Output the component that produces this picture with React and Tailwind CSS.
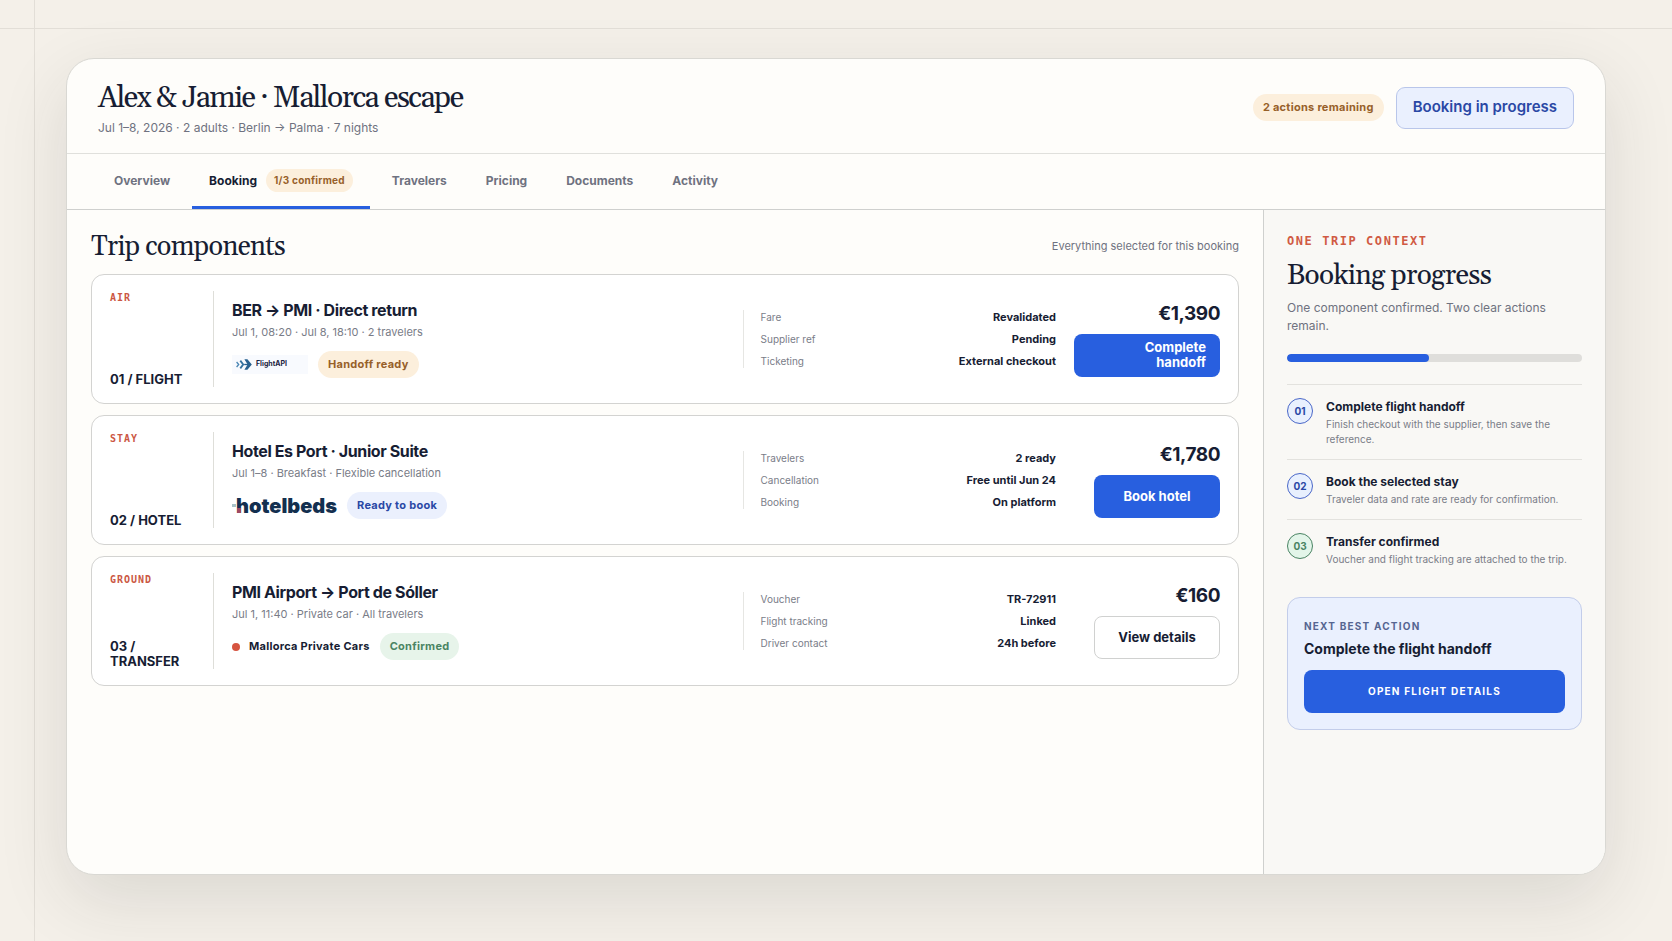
import React from "react";

const SERIF = "font-['Georgia','Gelasio','Liberation_Serif',serif]";
const MONO = "font-['DejaVu_Sans_Mono','Liberation_Mono',monospace]";

const TONES = {
  amber: "bg-[#fcefdc] text-[#976029]",
  blue: "bg-[#ebf0fd] text-[#2a48a5]",
  green: "bg-[#e7f4ea] text-[#4a8463]",
};

function Pill({ tone, children }) {
  return (
    <span className={`inline-flex h-[27px] items-center whitespace-nowrap rounded-full px-2.5 text-[11px] font-bold tracking-wide ${TONES[tone]}`}>
      {children}
    </span>
  );
}

function FlightLogo() {
  return (
    <span className="flex h-[19px] w-[76px] items-center gap-1 bg-[#f8fafe] pl-1">
      <svg width="16" height="11" viewBox="0 0 16 11" fill="none" aria-hidden="true">
        <path d="M0.6 3 L2.7 5.5 L0.6 8" stroke="#4a86b4" strokeWidth="1.3" />
        <path d="M4.3 1.6 L7.2 5.5 L4.3 9.4" stroke="#32719f" strokeWidth="1.8" />
        <path d="M8.4 0.2 H11.4 L15.8 5.5 L11.4 10.8 H8.4 L11.6 5.5 Z" fill="#27608f" />
        <path d="M8.2 5.5 H12.4" stroke="#27608f" strokeWidth="1.3" />
      </svg>
      <span className="text-[7px] font-bold text-[#1b2340]">FlightAPI</span>
    </span>
  );
}

function HotelLogo() {
  return (
    <span className="relative flex h-[22px] items-center pl-1 text-[20px] leading-[22px] font-black text-[#132f4f]">
      hotelbeds
      <svg className="absolute bottom-0 left-0" width="9" height="18" viewBox="0 0 9 18" aria-hidden="true">
        <rect x="0" y="5" width="4" height="3" fill="#a9c3c8" />
        <rect x="5" y="9" width="4" height="5" fill="#a04863" />
      </svg>
    </span>
  );
}

function CarsLogo() {
  return (
    <span className="flex items-center gap-[9px] text-[11px] font-bold tracking-wide text-[#171d33]">
      <span className="size-2 rounded-full bg-[#d65440]" />
      Mallorca Private Cars
    </span>
  );
}

const TRIPS = [
  {
    kind: "AIR",
    index: "01 / FLIGHT",
    title: "BER → PMI · Direct return",
    meta: "Jul 1, 08:20 · Jul 8, 18:10 · 2 travelers",
    logo: <FlightLogo />,
    status: "Handoff ready",
    tone: "amber",
    facts: [["Fare", "Revalidated"], ["Supplier ref", "Pending"], ["Ticketing", "External checkout"]],
    price: "€1,390",
    action: "Complete\nhandoff",
    primary: true,
  },
  {
    kind: "STAY",
    index: "02 / HOTEL",
    title: "Hotel Es Port · Junior Suite",
    meta: "Jul 1–8 · Breakfast · Flexible cancellation",
    logo: <HotelLogo />,
    status: "Ready to book",
    tone: "blue",
    facts: [["Travelers", "2 ready"], ["Cancellation", "Free until Jun 24"], ["Booking", "On platform"]],
    price: "€1,780",
    action: "Book hotel",
    primary: true,
  },
  {
    kind: "GROUND",
    index: "03 / TRANSFER",
    title: "PMI Airport → Port de Sóller",
    meta: "Jul 1, 11:40 · Private car · All travelers",
    logo: <CarsLogo />,
    status: "Confirmed",
    tone: "green",
    facts: [["Voucher", "TR-72911"], ["Flight tracking", "Linked"], ["Driver contact", "24h before"]],
    price: "€160",
    action: "View details",
    primary: false,
  },
];

function TripCard({ trip }) {
  const twoLines = trip.action.includes("\n");
  return (
    <article className="grid min-h-[130px] grid-cols-[104px_minmax(0,1.1fr)_minmax(0,0.7fr)_146px] items-center gap-x-[18px] rounded-[13px] border border-[#d3d3d1] bg-white px-[18px] py-4">
      <div className="flex flex-col justify-between self-stretch border-r border-[#deded9] pt-px pr-3">
        <span className={`text-[10px] leading-3 font-bold tracking-widest text-[#cb5743] ${MONO}`}>{trip.kind}</span>
        <strong className="text-[13px] leading-[15px] font-bold">{trip.index}</strong>
      </div>
      <div>
        <h3 className="text-[16px] leading-5 font-bold tracking-tight">{trip.title}</h3>
        <p className="mt-1 text-[11px] leading-4 text-[#797c87]">{trip.meta}</p>
        <div className="mt-[11px] flex items-center gap-2.5">
          {trip.logo}
          <Pill tone={trip.tone}>{trip.status}</Pill>
        </div>
      </div>
      <dl className="flex flex-col gap-2 border-l border-[#e6e6e3] pl-[17px] leading-[14px]">
        {trip.facts.map(([name, value]) => (
          <div key={name} className="flex items-center justify-between">
            <dt className="text-[10px] text-[#7a7d88]">{name}</dt>
            <dd className="text-[11px] font-bold">{value}</dd>
          </div>
        ))}
      </dl>
      <div className="flex flex-col items-end gap-2">
        <strong className="text-[19px] leading-6 font-bold tracking-tight">{trip.price}</strong>
        <button
          type="button"
          className={`flex h-[43px] min-w-[126px] items-center rounded-lg px-3.5 text-right text-[13px] leading-[15px] font-bold whitespace-pre-line ${
            twoLines ? "w-full justify-end" : "justify-center"
          } ${trip.primary ? "bg-[#285fdf] text-white" : "border border-[#d0d1d0] bg-white text-[#171d33]"}`}
        >
          {trip.action}
        </button>
      </div>
    </article>
  );
}

const TABS = ["Overview", "Booking", "Travelers", "Pricing", "Documents", "Activity"];

const STEPS = [
  { n: "01", title: "Complete flight handoff", text: "Finish checkout with the supplier, then save the reference.", done: false },
  { n: "02", title: "Book the selected stay", text: "Traveler data and rate are ready for confirmation.", done: false },
  { n: "03", title: "Transfer confirmed", text: "Voucher and flight tracking are attached to the trip.", done: true },
];

export default function App() {
  return (
    <div className="relative flex min-h-screen bg-[#f4f0e9] px-[66px] pt-[58px] pb-[66px] font-['Inter','Liberation_Sans',sans-serif] text-[#171d33]">
      <div className="absolute inset-x-0 top-7 h-px bg-[#e2ded7]" />
      <div className="absolute inset-y-0 left-[34px] w-px bg-[#e2ded7]" />

      <div className="relative flex grow flex-col overflow-hidden rounded-[28px] border border-[#d9d8d3] bg-[#fefdfa] shadow-[0_24px_70px_rgba(40,40,40,0.12)]">
        <header className="flex h-[95px] items-center justify-between border-b border-[#e0e0dc] px-[31px] pt-[3px]">
          <div>
            <h1 className={`text-[30px] leading-9 tracking-tighter ${SERIF}`}>Alex &amp; Jamie · Mallorca escape</h1>
            <p className="mt-1 text-[12px] leading-4 text-[#6f7280]">Jul 1–8, 2026 · 2 adults · Berlin → Palma · 7 nights</p>
          </div>
          <div className="flex items-center gap-3">
            <Pill tone="amber">2 actions remaining</Pill>
            <button type="button" className="h-[42px] rounded-[9px] border border-[#b9c6ea] bg-[#eaf0fe] px-4 text-[15px] font-semibold text-[#2a48a5]">
              Booking in progress
            </button>
          </div>
        </header>

        <nav className="flex h-14 gap-[5px] border-b border-[#cfd0ce] px-[30px]">
          {TABS.map((tab) => {
            const active = tab === "Booking";
            return (
              <a
                key={tab}
                href={`#${tab.toLowerCase()}`}
                className={`flex items-center gap-[9px] border-b-3 px-[17px] pt-px text-[12px] font-bold ${
                  active ? "border-[#285fdf]" : "border-transparent text-[#6f7280]"
                }`}
              >
                {tab}
                {active && (
                  <span className="flex h-[23px] items-center rounded-full bg-[#fcefdc] px-2 text-[10px] tracking-wide text-[#976029]">1/3 confirmed</span>
                )}
              </a>
            );
          })}
        </nav>

        <div className="grid grow grid-cols-[minmax(0,1fr)_342px]">
          <main className="px-6 pt-[18px]">
            <div className="flex items-center justify-between">
              <h2 className={`pt-[3px] text-[27px] leading-[33px] tracking-tight ${SERIF}`}>Trip components</h2>
              <p className="text-[11px] text-[#6f7280]">Everything selected for this booking</p>
            </div>
            <div className="mt-2.5 flex flex-col gap-[11px]">
              {TRIPS.map((trip) => (
                <TripCard key={trip.kind} trip={trip} />
              ))}
            </div>
          </main>

          <aside className="border-l border-[#cfd0ce] bg-[#f9f8f5] px-[23px] pt-[23px]">
            <p className={`text-[12px] leading-4 font-bold tracking-[0.13em] text-[#d05a43] ${MONO}`}>ONE TRIP CONTEXT</p>
            <h2 className={`mt-[9px] text-[28px] leading-9 tracking-tight ${SERIF}`}>Booking progress</h2>
            <p className="mt-[5px] text-[12px] leading-[18px] text-[#6f7280]">One component confirmed. Two clear actions remain.</p>
            <div role="progressbar" aria-label="Booking progress" aria-valuenow={48} className="mt-[19px] h-2 overflow-hidden rounded-full bg-[#dfdedb]">
              <div className="h-full w-[48%] rounded-full bg-[#285fdf]" />
            </div>
            <ol className="mt-[22px]">
              {STEPS.map((step) => (
                <li key={step.n} className="flex gap-[13px] border-t border-[#e3e2de] pt-[13px] pb-3">
                  <span
                    className={`flex size-[26px] shrink-0 items-center justify-center rounded-full border text-[10px] font-bold ${
                      step.done ? "border-[#4a8463] bg-[#e3f5e9] text-[#4a8463]" : "border-[#4a67c8] bg-[#e8f0fe] text-[#2a48a5]"
                    }`}
                  >
                    {step.n}
                  </span>
                  <div>
                    <h3 className="text-[12px] leading-[18px] font-bold">{step.title}</h3>
                    <p className="mt-px text-[10px] leading-[15px] text-[#7a7d88]">{step.text}</p>
                  </div>
                </li>
              ))}
            </ol>
            <section className="mt-[18px] rounded-[13px] border border-[#c3cdea] bg-[#eaf0fe] p-4">
              <p className="mt-1 text-[10px] leading-4 font-bold tracking-[0.12em] text-[#566591]">NEXT BEST ACTION</p>
              <h3 className="mt-1.5 text-[14px] leading-[18px] font-bold">Complete the flight handoff</h3>
              <button type="button" className="mt-3 h-[43px] w-full rounded-lg bg-[#285fdf] text-[10px] font-bold tracking-[0.12em] text-white">
                OPEN FLIGHT DETAILS
              </button>
            </section>
          </aside>
        </div>
      </div>
    </div>
  );
}
